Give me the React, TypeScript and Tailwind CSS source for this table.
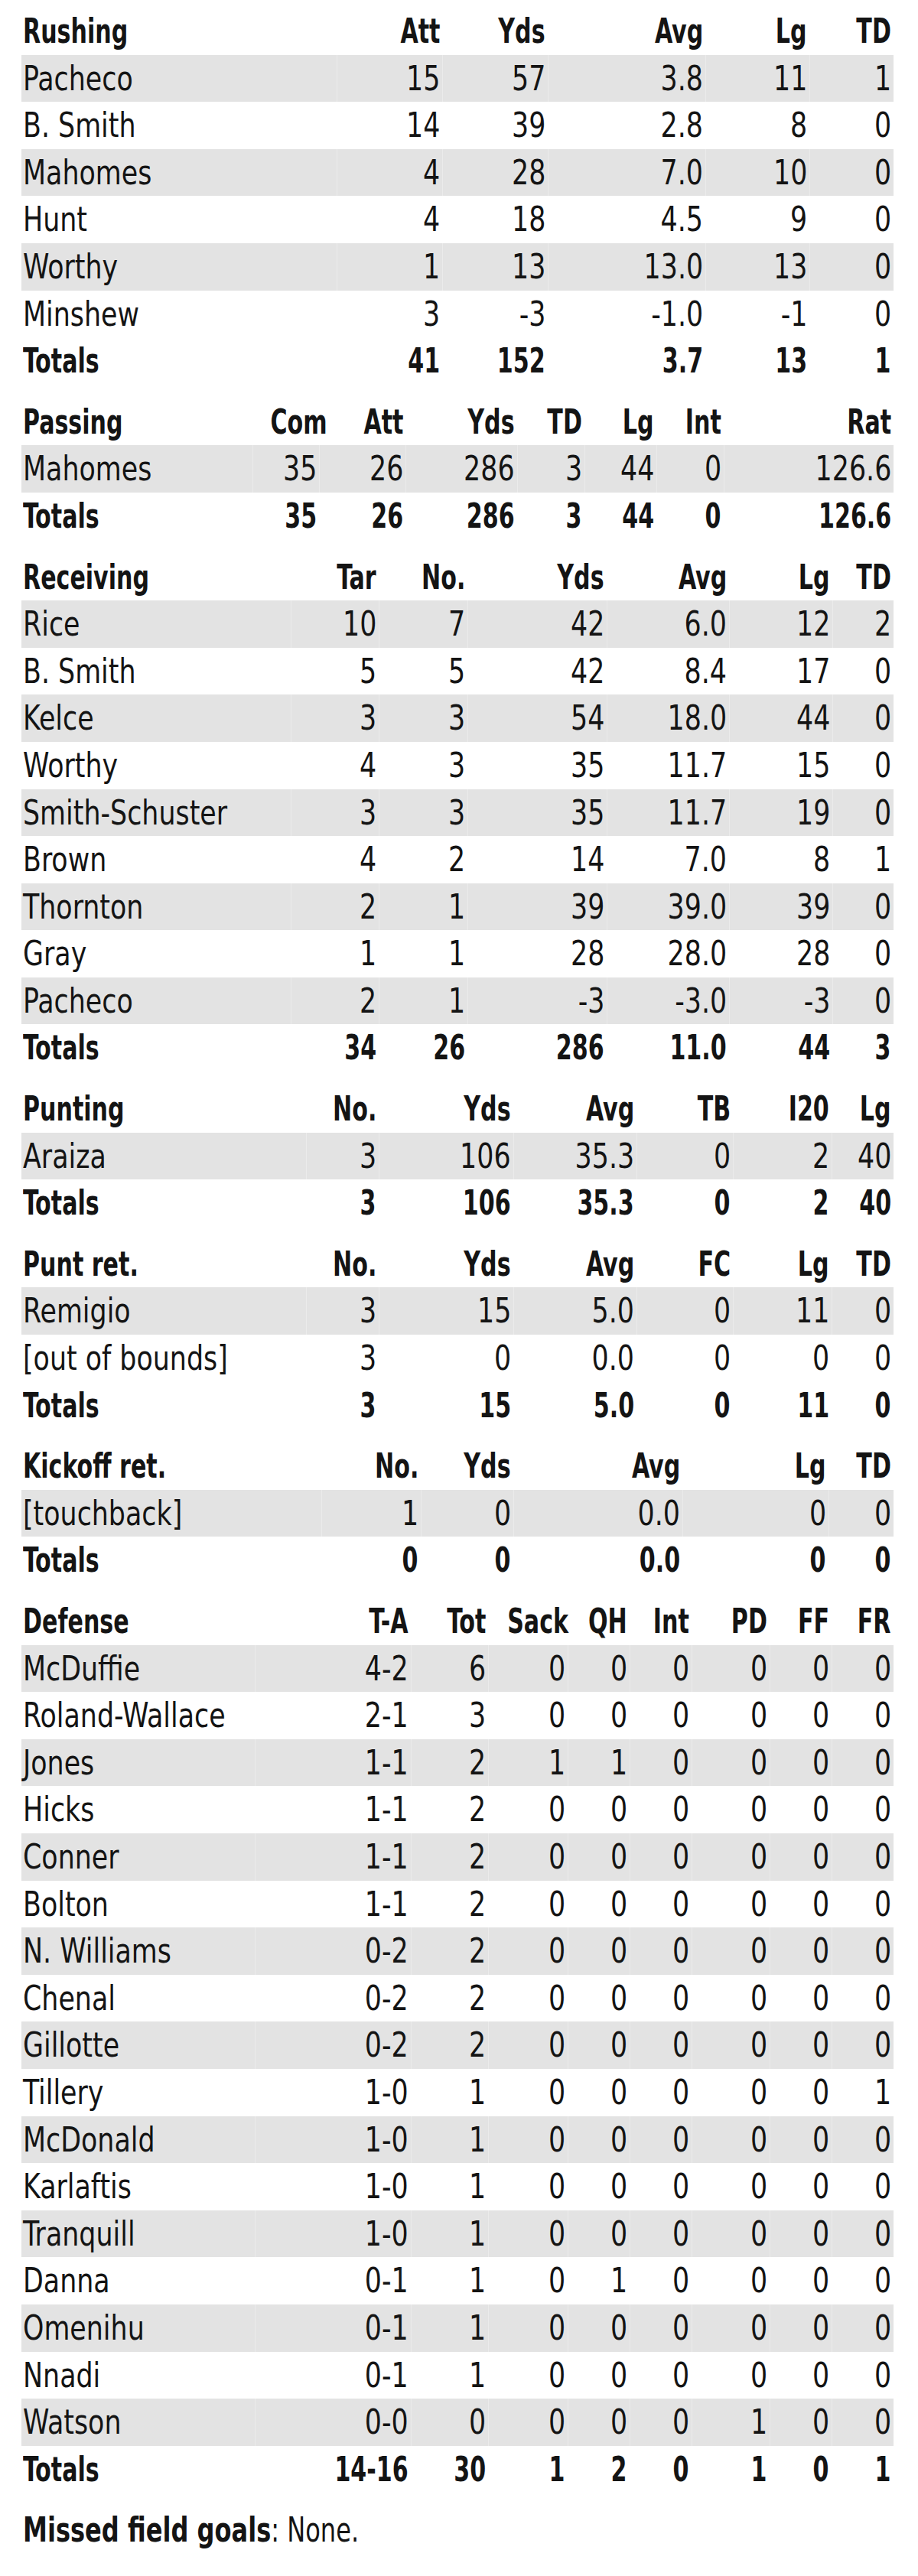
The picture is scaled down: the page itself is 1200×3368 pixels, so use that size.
type Section = {
  title: string;
  cols: string[];
  grid: string;
  rows: (string | number)[][];
  totals: (string | number)[];
};

const sections: Section[] = [
  {
    title: "Rushing",
    cols: ["Att", "Yds", "Avg", "Lg", "TD"],
    grid: "grid-cols-[412px_138px_138px_206px_136px_110px]",
    rows: [
      ["Pacheco", 15, 57, "3.8", 11, 1],
      ["B. Smith", 14, 39, "2.8", 8, 0],
      ["Mahomes", 4, 28, "7.0", 10, 0],
      ["Hunt", 4, 18, "4.5", 9, 0],
      ["Worthy", 1, 13, "13.0", 13, 0],
      ["Minshew", 3, -3, "-1.0", -1, 0],
    ],
    totals: ["Totals", 41, 152, "3.7", 13, 1],
  },
  {
    title: "Passing",
    cols: ["Com", "Att", "Yds", "TD", "Lg", "Int", "Rat"],
    grid: "grid-cols-[302px_87px_113px_146px_88px_94px_88px_222px]",
    rows: [["Mahomes", 35, 26, 286, 3, 44, 0, "126.6"]],
    totals: ["Totals", 35, 26, 286, 3, 44, 0, "126.6"],
  },
  {
    title: "Receiving",
    cols: ["Tar", "No.", "Yds", "Avg", "Lg", "TD"],
    grid: "grid-cols-[352px_115px_116px_182px_160px_135px_80px]",
    rows: [
      ["Rice", 10, 7, 42, "6.0", 12, 2],
      ["B. Smith", 5, 5, 42, "8.4", 17, 0],
      ["Kelce", 3, 3, 54, "18.0", 44, 0],
      ["Worthy", 4, 3, 35, "11.7", 15, 0],
      ["Smith-Schuster", 3, 3, 35, "11.7", 19, 0],
      ["Brown", 4, 2, 14, "7.0", 8, 1],
      ["Thornton", 2, 1, 39, "39.0", 39, 0],
      ["Gray", 1, 1, 28, "28.0", 28, 0],
      ["Pacheco", 2, 1, -3, "-3.0", -3, 0],
    ],
    totals: ["Totals", 34, 26, 286, "11.0", 44, 3],
  },
  {
    title: "Punting",
    cols: ["No.", "Yds", "Avg", "TB", "I20", "Lg"],
    grid: "grid-cols-[372px_95px_176px_161px_126px_129px_81px]",
    rows: [["Araiza", 3, 106, "35.3", 0, 2, 40]],
    totals: ["Totals", 3, 106, "35.3", 0, 2, 40],
  },
  {
    title: "Punt ret.",
    cols: ["No.", "Yds", "Avg", "FC", "Lg", "TD"],
    grid: "grid-cols-[372px_95px_176px_161px_126px_129px_81px]",
    rows: [
      ["Remigio", 3, 15, "5.0", 0, 11, 0],
      ["[out of bounds]", 3, 0, "0.0", 0, 0, 0],
    ],
    totals: ["Totals", 3, 15, "5.0", 0, 11, 0],
  },
  {
    title: "Kickoff ret.",
    cols: ["No.", "Yds", "Avg", "Lg", "TD"],
    grid: "grid-cols-[392px_130px_121px_221px_191px_85px]",
    rows: [["[touchback]", 1, 0, "0.0", 0, 0]],
    totals: ["Totals", 0, 0, "0.0", 0, 0],
  },
  {
    title: "Defense",
    cols: ["T-A", "Tot", "Sack", "QH", "Int", "PD", "FF", "FR"],
    grid: "grid-cols-[305px_204px_101px_104px_81px_81px_102px_81px_81px]",
    rows: [
      ["McDuffie", "4-2", 6, 0, 0, 0, 0, 0, 0],
      ["Roland-Wallace", "2-1", 3, 0, 0, 0, 0, 0, 0],
      ["Jones", "1-1", 2, 1, 1, 0, 0, 0, 0],
      ["Hicks", "1-1", 2, 0, 0, 0, 0, 0, 0],
      ["Conner", "1-1", 2, 0, 0, 0, 0, 0, 0],
      ["Bolton", "1-1", 2, 0, 0, 0, 0, 0, 0],
      ["N. Williams", "0-2", 2, 0, 0, 0, 0, 0, 0],
      ["Chenal", "0-2", 2, 0, 0, 0, 0, 0, 0],
      ["Gillotte", "0-2", 2, 0, 0, 0, 0, 0, 0],
      ["Tillery", "1-0", 1, 0, 0, 0, 0, 0, 1],
      ["McDonald", "1-0", 1, 0, 0, 0, 0, 0, 0],
      ["Karlaftis", "1-0", 1, 0, 0, 0, 0, 0, 0],
      ["Tranquill", "1-0", 1, 0, 0, 0, 0, 0, 0],
      ["Danna", "0-1", 1, 0, 1, 0, 0, 0, 0],
      ["Omenihu", "0-1", 1, 0, 0, 0, 0, 0, 0],
      ["Nnadi", "0-1", 1, 0, 0, 0, 0, 0, 0],
      ["Watson", "0-0", 0, 0, 0, 0, 1, 0, 0],
    ],
    totals: ["Totals", "14-16", 30, 1, 2, 0, 1, 0, 1],
  },
];

// DejaVu Sans Condensed is wider than the narrow newspaper face, so squeeze it
function Txt({
  children,
  bold,
  right,
}: {
  children: React.ReactNode;
  bold?: boolean;
  right?: boolean;
}) {
  return (
    <span
      className={`inline-block ${bold ? "scale-x-[0.76]" : "scale-x-[0.88]"} ${
        right ? "origin-right" : "origin-left"
      }`}
    >
      {children}
    </span>
  );
}

function Row({
  cells,
  grid,
  striped = false,
  bold = false,
}: {
  cells: (string | number)[];
  grid: string;
  striped?: boolean;
  bold?: boolean;
}) {
  return (
    <div
      className={`grid ${grid} h-[61.6px] leading-[61.6px] ${
        striped ? "bg-[#e3e3e3]" : ""
      } ${bold ? "font-bold" : ""}`}
    >
      {cells.map((c, i) =>
        i === 0 ? (
          <div key={i} className="pl-[2px] whitespace-nowrap">
            <Txt bold={bold}>{c}</Txt>
          </div>
        ) : (
          <div
            key={i}
            className={`pr-[3px] text-right whitespace-nowrap ${
              striped ? "border-l border-[#ebebeb]" : ""
            }`}
          >
            <Txt bold={bold} right>
              {c}
            </Txt>
          </div>
        )
      )}
    </div>
  );
}

function StatTable({ section }: { section: Section }) {
  return (
    <div>
      <Row cells={[section.title, ...section.cols]} grid={section.grid} bold />
      {section.rows.map((r, i) => (
        <Row key={i} cells={r} grid={section.grid} striped={i % 2 === 0} />
      ))}
      <Row cells={section.totals} grid={section.grid} bold />
    </div>
  );
}

export default function App() {
  return (
    <div className="w-[1200px] min-h-[3368px] bg-white pl-[28px] pr-[32px] pt-[10px] text-[44px] text-[#141414] font-['DejaVu_Sans_Condensed','DejaVu_Sans',sans-serif]">
      <div className="flex flex-col gap-[18px]">
        {sections.map((s) => (
          <StatTable key={s.title} section={s} />
        ))}
        <div className="h-[61.6px] leading-[61.6px] pl-[2px] whitespace-nowrap">
          <span className="inline-block scale-x-[0.81] origin-left">
            <span className="font-bold">Missed field goals</span>: None.
          </span>
        </div>
      </div>
    </div>
  );
}
